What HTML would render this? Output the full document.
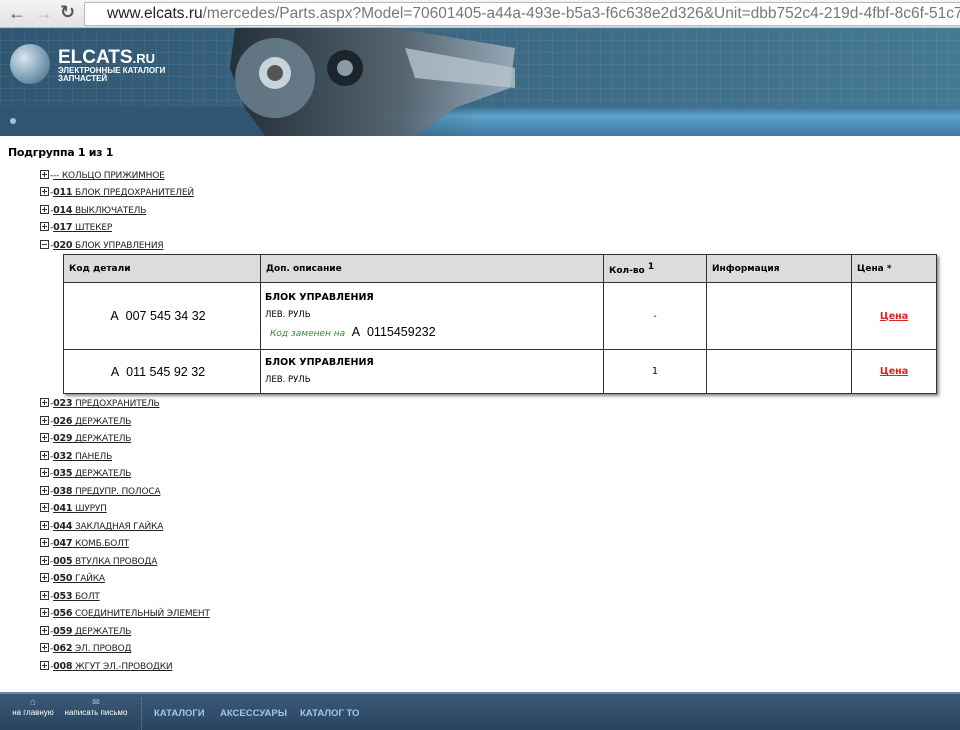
<!DOCTYPE html>
<html><head><meta charset="utf-8"><style>
*{margin:0;padding:0;box-sizing:border-box}
body{width:960px;height:730px;overflow:hidden;background:#fff;font-family:"Liberation Sans","DejaVu Sans",sans-serif;position:relative}
#bar{position:absolute;left:0;top:0;width:960px;height:28px;background:linear-gradient(#f4f4f4,#e2e2e2);border-bottom:1px solid #bbb}
#url{position:absolute;left:84px;top:2px;width:890px;height:24px;background:#fff;border:1px solid #b8b8b8;border-radius:2px;font-size:15.5px;line-height:22px;padding-left:22px;color:#777;white-space:nowrap;overflow:hidden}
#url b{font-weight:normal;color:#222}
#banner{position:absolute;left:0;top:28px;width:960px;height:108px;background:
linear-gradient(90deg,rgba(255,255,255,.06) 1px,transparent 1px) 0 0/12px 12px,
linear-gradient(rgba(255,255,255,.06) 1px,transparent 1px) 0 0/12px 12px,
linear-gradient(90deg,#2f5672,#3a6580 40%,#457a94)}
#band{position:absolute;left:0;top:79px;width:960px;height:29px;background:linear-gradient(#3d6f90,#5fa3cc 30%,#3f7aa0);}
#band:before{content:"";position:absolute;left:0;top:0;width:480px;height:29px;background:linear-gradient(90deg,#2e5571 60%,rgba(45,84,112,0))}
.item{position:absolute;left:40px;font-size:9px;color:#222;white-space:nowrap;font-family:"DejaVu Sans",sans-serif;letter-spacing:-.2px}
.item b{font-size:9.5px}
.item i{display:inline-block;width:9px;height:9px;border:1px solid #333;vertical-align:-1px;position:relative;margin-right:1px}
.item i:before{content:"";position:absolute;left:1px;top:3px;width:5px;height:1px;background:#333}
.item i.p:after{content:"";position:absolute;left:3px;top:1px;width:1px;height:5px;background:#333}
.item u{color:#222}
table{position:absolute;left:63px;top:254px;border-collapse:collapse;box-shadow:2px 2px 3px #888;font-family:"DejaVu Sans",sans-serif}
td,th{border:1.5px solid #333;font-size:9.5px;vertical-align:middle}
th{background:#dcdcdc;text-align:left;padding-left:5px;height:28px;font-weight:bold;font-size:9px}
#foot{position:absolute;left:0;top:692px;width:960px;height:38px;background:linear-gradient(#3a5a78,#2a4460);border-top:2px solid #6a8aa8}
#foot .s{position:absolute;top:3px;font-size:8px;color:#fff;text-align:center}
#foot .n{position:absolute;top:14px;font-size:9.5px;font-weight:bold;color:#9cc8ea}
</style></head><body>
<div id="bar">
<span style="position:absolute;left:8px;top:3px;font-size:18px;color:#555">&#8592;</span>
<span style="position:absolute;left:35px;top:3px;font-size:18px;color:#bbb">&#8594;</span>
<span style="position:absolute;left:60px;top:2px;font-size:18px;color:#555;font-weight:bold">&#8635;</span>
<div id="url"><b>www.elcats.ru</b>/mercedes/Parts.aspx?Model=70601405-a44a-493e-b5a3-f6c638e2d326&amp;Unit=dbb752c4-219d-4fbf-8c6f-51c773347ac5&amp;T</div>
</div>
<div id="banner">
<div id="band"></div>
<div style="position:absolute;left:10px;top:16px;width:40px;height:40px;border-radius:50%;background:radial-gradient(circle at 35% 35%,#d8e6ee,#7d9fb4 55%,#3e6680)"></div>
<div style="position:absolute;left:58px;top:19px;color:#fff;font-weight:bold;font-size:19px">ELCATS<span style="font-size:13px">.RU</span></div>
<div style="position:absolute;left:58px;top:39px;color:#fff;font-weight:bold;font-size:8px;line-height:8px">ЭЛЕКТРОННЫЕ КАТАЛОГИ<br>ЗАПЧАСТЕЙ</div>
<div style="position:absolute;left:10px;top:90px;width:6px;height:6px;border-radius:50%;background:#9fc4e0"></div>
<svg style="position:absolute;left:225px;top:0" width="290" height="108">
<defs><linearGradient id="g" x1="0" x2="1"><stop offset="0" stop-color="#222b33"/><stop offset=".6" stop-color="#56646e"/><stop offset="1" stop-color="#9fb0bc"/></linearGradient></defs>
<path d="M10 0 L170 0 L290 20 L285 60 L230 80 L190 108 L40 108 L20 80 L5 40 Z" fill="url(#g)" opacity=".9"/>
<circle cx="50" cy="50" r="40" fill="#6f8494" opacity=".8"/>
<circle cx="50" cy="45" r="16" fill="#c9d3da"/><circle cx="50" cy="45" r="8" fill="#555"/>
<circle cx="120" cy="40" r="18" fill="#1d252c"/><circle cx="120" cy="40" r="8" fill="#8a9aa6"/>
<path d="M180 20 L290 40 L290 60 L190 50 Z" fill="#b7c3cc" opacity=".8"/>
</svg>
</div>
<div style="position:absolute;left:8px;top:146px;font-size:11px;font-weight:bold;font-family:'DejaVu Sans',sans-serif;letter-spacing:-.3px">Подгруппа 1 из 1</div>

<div class="item" style="top:170px"><i class="p"></i>-<u>-- КОЛЬЦО ПРИЖИМНОЕ</u></div>
<div class="item" style="top:187px"><i class="p"></i>-<u><b>011</b> БЛОК ПРЕДОХРАНИТЕЛЕЙ</u></div>
<div class="item" style="top:205px"><i class="p"></i>-<u><b>014</b> ВЫКЛЮЧАТЕЛЬ</u></div>
<div class="item" style="top:222px"><i class="p"></i>-<u><b>017</b> ШТЕКЕР</u></div>
<div class="item" style="top:240px"><i></i>-<u><b>020</b> БЛОК УПРАВЛЕНИЯ</u></div>

<table>
<tr><th style="width:197px">Код детали</th><th style="width:343px">Доп. описание</th><th style="width:103px">Кол-во <sup style="font-size:9px">1</sup></th><th style="width:145px">Информация</th><th style="width:85px">Цена *</th></tr>
<tr style="height:67px"><td style="text-align:center;font-family:'Liberation Sans';font-size:12.5px;padding-right:8px">А&nbsp; 007 545 34 32</td>
<td style="padding-left:4px;line-height:17px"><b>БЛОК УПРАВЛЕНИЯ</b><br><span style="font-size:8.5px">ЛЕВ. РУЛЬ</span><br><span style="font-size:9px;color:#3a8a3a;font-style:italic;margin-left:5px">Код заменен на</span> <span style="font-family:'Liberation Sans';font-size:12.5px">&nbsp;А&nbsp; 0115459232</span></td>
<td style="text-align:center">-</td><td></td><td style="text-align:center"><u style="color:#d22;font-weight:bold">Цена</u></td></tr>
<tr style="height:44px"><td style="text-align:center;font-family:'Liberation Sans';font-size:12.5px;padding-right:8px">А&nbsp; 011 545 92 32</td>
<td style="padding-left:4px;line-height:17px"><b>БЛОК УПРАВЛЕНИЯ</b><br><span style="font-size:8.5px">ЛЕВ. РУЛЬ</span></td>
<td style="text-align:center">1</td><td></td><td style="text-align:center"><u style="color:#d22;font-weight:bold">Цена</u></td></tr>
</table>

<div class="item" style="top:398px"><i class="p"></i>-<u><b>023</b> ПРЕДОХРАНИТЕЛЬ</u></div>
<div class="item" style="top:416px"><i class="p"></i>-<u><b>026</b> ДЕРЖАТЕЛЬ</u></div>
<div class="item" style="top:433px"><i class="p"></i>-<u><b>029</b> ДЕРЖАТЕЛЬ</u></div>
<div class="item" style="top:451px"><i class="p"></i>-<u><b>032</b> ПАНЕЛЬ</u></div>
<div class="item" style="top:468px"><i class="p"></i>-<u><b>035</b> ДЕРЖАТЕЛЬ</u></div>
<div class="item" style="top:486px"><i class="p"></i>-<u><b>038</b> ПРЕДУПР. ПОЛОСА</u></div>
<div class="item" style="top:503px"><i class="p"></i>-<u><b>041</b> ШУРУП</u></div>
<div class="item" style="top:521px"><i class="p"></i>-<u><b>044</b> ЗАКЛАДНАЯ ГАЙКА</u></div>
<div class="item" style="top:538px"><i class="p"></i>-<u><b>047</b> КОМБ.БОЛТ</u></div>
<div class="item" style="top:556px"><i class="p"></i>-<u><b>005</b> ВТУЛКА ПРОВОДА</u></div>
<div class="item" style="top:573px"><i class="p"></i>-<u><b>050</b> ГАЙКА</u></div>
<div class="item" style="top:591px"><i class="p"></i>-<u><b>053</b> БОЛТ</u></div>
<div class="item" style="top:608px"><i class="p"></i>-<u><b>056</b> СОЕДИНИТЕЛЬНЫЙ ЭЛЕМЕНТ</u></div>
<div class="item" style="top:626px"><i class="p"></i>-<u><b>059</b> ДЕРЖАТЕЛЬ</u></div>
<div class="item" style="top:643px"><i class="p"></i>-<u><b>062</b> ЭЛ. ПРОВОД</u></div>
<div class="item" style="top:661px"><i class="p"></i>-<u><b>008</b> ЖГУТ ЭЛ.-ПРОВОДКИ</u></div>

<div id="foot">
<div class="s" style="left:11px;width:44px"><span style="color:#9cc8ea;font-size:10px">⌂</span><br>на главную</div>
<div class="s" style="left:63px;width:66px"><span style="color:#9cc8ea;font-size:9px">✉</span><br>написать письмо</div>
<div style="position:absolute;left:141px;top:4px;height:32px;border-left:1px dotted #6a86a0"></div>
<div class="n" style="left:154px">КАТАЛОГИ</div>
<div class="n" style="left:220px">АКСЕССУАРЫ</div>
<div class="n" style="left:300px">КАТАЛОГ ТО</div>
</div>
</body></html>
